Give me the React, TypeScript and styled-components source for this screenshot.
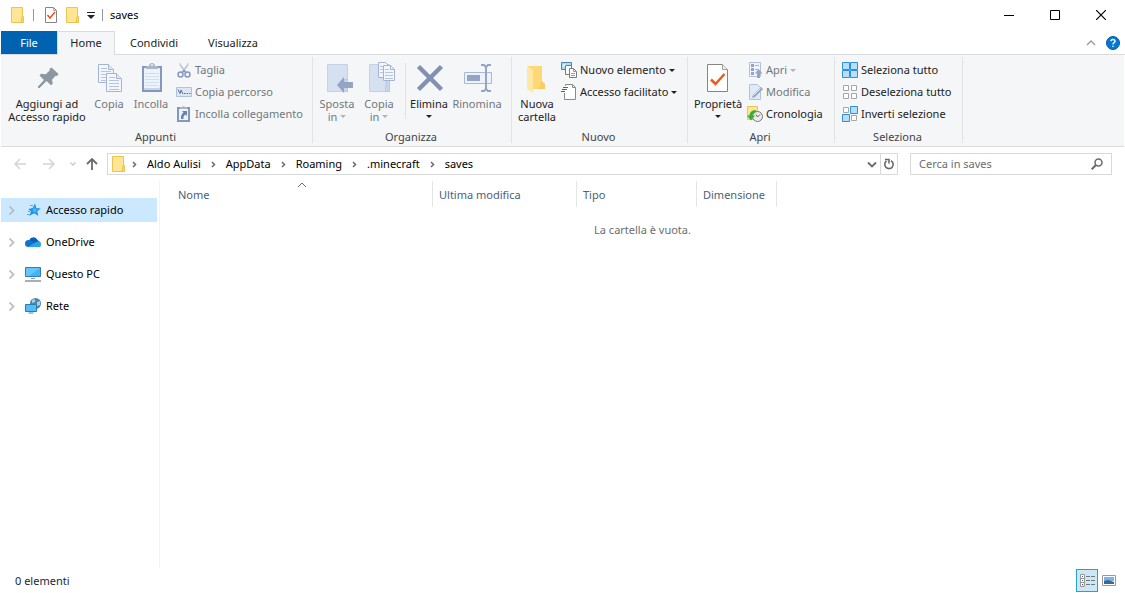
import React from "react";
import styled, { createGlobalStyle, css } from "styled-components";

const GlobalStyle = createGlobalStyle`
  *, *::before, *::after { box-sizing: border-box; }
  body {
    margin: 0;
    background: #fff;
    color: #000;
    font-family: "Noto Sans", "Open Sans", sans-serif;
    font-size: 11px;
    line-height: 16px;
  }
  button, input { font: inherit; color: inherit; }
  button { margin: 0; padding: 0; border: 0; background: none; }
  svg { display: block; flex: none; }
`;

const Window = styled.div`
  display: flex;
  flex-direction: column;
  min-height: 100vh;
`;

const TitleBar = styled.header`
  display: flex;
  align-items: flex-start;
  height: 31px;
  padding: 0 1px 0 10px;
`;

const QuickBar = styled.div`
  display: flex;
  align-items: center;
  gap: 7px;
  flex: 1;
  height: 30px;
`;

const QuickSeparator = styled.span`
  width: 1px;
  height: 12px;
  background: #999;
`;

const QuickGroup = styled.div`
  display: flex;
  align-items: center;
  gap: 6px;
  padding-left: 2px;
`;

const WindowTitle = styled.h1`
  margin: 0;
  font-size: 11px;
  font-weight: 400;
`;

const CaptionButton = styled.button`
  display: grid;
  place-items: center;
  width: 46px;
  height: 30px;
`;

const TabBar = styled.div`
  display: flex;
  height: 24px;
  padding: 0 5px 0 1px;
  border-bottom: 1px solid #dadbdc;
`;

const Tab = styled.button<{ $kind?: "file" | "active" }>`
  height: 23px;
  padding: 0 15px;
  min-width: 56px;
  color: #222;
  ${(p) =>
    p.$kind === "file" &&
    css`
      background: #0063b1;
      color: #fff;
      width: 56px;
    `}
  ${(p) =>
    p.$kind === "active" &&
    css`
      width: 58px;
      height: 24px;
      padding: 0 0 1px;
      border: 1px solid #dadbdc;
      border-bottom: 0;
      background: #f5f6f7;
    `}
`;

const TabTools = styled.div`
  display: flex;
  align-items: center;
  gap: 10px;
  margin-left: auto;
`;

const IconButton = styled.button<{ $w?: number }>`
  display: grid;
  place-items: center;
  width: ${(p) => (p.$w ? `${p.$w}px` : "auto")};
`;

const Ribbon = styled.section`
  display: flex;
  height: 92px;
  margin: 0 1px;
  padding: 2px 0 3px;
  border-bottom: 1px solid #dadbdc;
  background: #f5f6f7;
`;

const Group = styled.div<{ $w: number }>`
  display: flex;
  flex-direction: column;
  justify-content: space-between;
  flex: none;
  width: ${(p) => p.$w}px;
  border-right: 1px solid #e2e3e4;
`;

const GroupBody = styled.div`
  display: flex;
  height: 73px;
  padding-left: 4px;
`;

const GroupLabel = styled.div`
  padding-right: 2px;
  color: #444;
  text-align: center;
  line-height: 13px;
`;

const BigButton = styled.button<{ $w: number; $off?: boolean }>`
  display: flex;
  flex-direction: column;
  align-items: center;
  width: ${(p) => p.$w}px;
  padding-top: 5px;
  line-height: 13px;
  white-space: nowrap;
  color: ${(p) => (p.$off ? "#72767c" : "#222")};
`;

const BigText = styled.span`
  padding-top: 3px;
`;

const SecondLine = styled.span`
  display: flex;
  align-items: center;
  justify-content: center;
  gap: 3px;
  height: 13px;
`;

const SmallColumn = styled.div`
  display: flex;
  flex-direction: column;
  padding: 2px 0 0 3px;
`;

const SmallButton = styled.button<{ $off?: boolean }>`
  display: flex;
  align-items: center;
  gap: 3px;
  height: 22px;
  white-space: nowrap;
  color: ${(p) => (p.$off ? "#72767c" : "#222")};
`;

const InnerSeparator = styled.span`
  width: 1px;
  height: 56px;
  margin: 6px 0 0 4px;
  background: #e2e3e4;
`;

const NavBar = styled.div`
  display: flex;
  align-items: center;
  height: 34px;
  padding: 0 13px 0 12px;
`;

const HistoryButtons = styled.div`
  display: flex;
  align-items: center;
  width: 95px;
`;

const AddressBox = styled.div`
  display: flex;
  flex: 1;
  align-items: center;
  height: 22px;
  padding-left: 3px;
  border: 1px solid #d9d9d9;
`;

const Crumbs = styled.nav`
  display: flex;
  align-items: center;
  flex: 1;
  gap: 9px;
  padding-left: 4px;
`;

const Crumb = styled.a`
  color: #000;
  text-decoration: none;
`;

const RefreshCell = styled.div`
  display: grid;
  place-items: center;
  width: 17px;
  height: 20px;
  border-left: 1px solid #d9d9d9;
`;

const SearchBox = styled.form`
  display: flex;
  align-items: center;
  width: 202px;
  height: 22px;
  margin-left: 12px;
  padding: 0 8px;
  border: 1px solid #d9d9d9;
`;

const SearchInput = styled.input`
  flex: 1;
  min-width: 0;
  padding: 0;
  border: 0;
  outline: 0;
  background: none;
  &::placeholder { color: #6d6d6d; opacity: 1; }
`;

const Main = styled.div`
  display: flex;
  flex: 1;
`;

const Sidebar = styled.ul`
  display: flex;
  flex-direction: column;
  gap: 8px;
  width: 160px;
  margin: 0;
  padding: 17px 2px 0 1px;
  border-right: 1px solid #f3f3f3;
  list-style: none;
`;

const TreeItem = styled.a<{ $selected?: boolean }>`
  display: flex;
  align-items: center;
  gap: 5px;
  height: 24px;
  padding-left: 7px;
  color: #000;
  text-decoration: none;
  background: ${(p) => (p.$selected ? "#cce8ff" : "transparent")};
`;

const TreeIcon = styled.span`
  margin-left: 5px;
`;

const Content = styled.main`
  flex: 1;
  min-width: 0;
`;

const FileTable = styled.table`
  width: 617px;
  table-layout: fixed;
  border-collapse: separate;
  border-spacing: 0;
`;

const HeadCell = styled.th<{ $w: number; $first?: boolean }>`
  position: relative;
  width: ${(p) => p.$w}px;
  height: 26px;
  padding: 2px 0 0 ${(p) => (p.$first ? 18 : 6)}px;
  border-right: 1px solid #e5e5e5;
  color: #4c607a;
  font-weight: 400;
  text-align: left;
`;

const SortMark = styled.span`
  position: absolute;
  top: 1px;
  left: calc(50% + 1px);
`;

const EmptyMessage = styled.p`
  margin: 15px 0 0;
  color: #6d6d6d;
  text-align: center;
`;

const StatusBar = styled.footer`
  display: flex;
  align-items: center;
  height: 25px;
  padding: 0 9px 0 15px;
  color: #14283c;
`;

const ViewButtons = styled.div`
  display: flex;
  align-items: center;
  gap: 4px;
  margin-left: auto;
`;

const ViewButton = styled.button<{ $on?: boolean }>`
  display: grid;
  place-items: center;
  height: 23px;
  width: ${(p) => (p.$on ? 22 : 14)}px;
  border: ${(p) => (p.$on ? "1px solid #26a0da" : "0")};
  background: ${(p) => (p.$on ? "#cbe8f6" : "none")};
`;

const Svg = ({ w = 16, h = 16, children }: { w?: number; h?: number; children: React.ReactNode }) => (
  <svg width={w} height={h} viewBox={`0 0 ${w} ${h}`} fill="none" aria-hidden="true">
    {children}
  </svg>
);

const Caret = ({ off }: { off?: boolean }) => (
  <Svg w={6} h={3}>
    <path d="M0 0h6L3 3z" fill={off ? "#b1b3b6" : "#222"} />
  </Svg>
);

const FolderIcon = () => (
  <Svg w={16} h={18}>
    <path d="M1.500 1.500h11v11l1 1v3h-12z" fill="#ffe594" stroke="#eac54f" />
    <path d="M12 10.500h1.500v6H11z" fill="#ffd75e" stroke="#eac54f" />
  </Svg>
);

const CheckPageIcon = () => (
  <Svg w={16} h={18}>
    <path d="M2.500 1.500h8l3 3v12h-11z" fill="#fff" stroke="#858585" />
    <path d="M10.500 1.500v3h3" stroke="#a5a5a5" />
    <path d="M4.500 9l2.500 3 5-6" stroke="#f0531c" strokeWidth="1.600" />
  </Svg>
);

const PinIcon = () => (
  <Svg w={32} h={32}>
    <path d="M20.500 5.500L27.500 12l-1.500 2-1.500-.3-3.500 4 .7 4-1.700 1.600-4.500-4.300L8.500 26H7v-1.500l6-6.500-4.500-4.500L10 11.700l4.700.6 4-3.800-.2-1.500z" fill="#8d979f" />
  </Svg>
);

const CopyPage = ({ x, y }: { x: number; y: number }) => (
  <g transform={`translate(${x} ${y})`}>
    <path d="M.5.5h10l5 5v13H.5z" fill="#f3f7fd" stroke="#a4b4d2" />
    <path d="M10.500.5v5h5" fill="#dfe8f5" stroke="#a4b4d2" />
    <path d="M3 4.500h6M3 7.500h10M3 10.500h10M3 13.500h10M3 16.500h10" stroke="#b5c3dd" />
  </g>
);

const CopyIcon = () => (
  <Svg w={32} h={32}>
    <CopyPage x={5} y={2} />
    <CopyPage x={13} y={11} />
  </Svg>
);

const PasteIcon = () => (
  <Svg w={32} h={32}>
    <path d="M8 5h18v24H8z" fill="#edf3fb" stroke="#8497bd" strokeWidth="2" />
    <path d="M10 26h14l1-1v3H9v-2z" fill="#c6d4e8" />
    <path d="M10 11.500h14M10 14.500h14M10 17.500h14M10 20.500h14M10 23.500h14" stroke="#d3deee" />
    <path d="M11 7V4h3c0-4 6-4 6 0h3v3z" fill="#aab5c8" />
    <circle cx="17" cy="3" r="1" fill="#f5f6f7" />
  </Svg>
);

const ScissorsIcon = () => (
  <Svg>
    <path d="M3 0l1 4 4 5 1-1zM13 0l-1 4-4 5-1-1z" fill="#b7c2d3" />
    <circle cx="4.500" cy="12.500" r="2.500" stroke="#8497bd" strokeWidth="1.500" />
    <circle cx="11.500" cy="12.500" r="2.500" stroke="#8497bd" strokeWidth="1.500" />
    <path d="M6 11l2-3 2 3" stroke="#8497bd" strokeWidth="1.500" />
  </Svg>
);

const PathIcon = () => (
  <Svg>
    <path d="M.5 3.500h15v9H.5z" fill="#dce6f5" stroke="#b2c1dc" />
    <path d="M2 5.500l2 4 1-3.500 2 4" stroke="#5e7197" />
    <path d="M8 9.500h1.500M10.500 9.500H12M13 9.500h1.500" stroke="#5e7197" />
  </Svg>
);

const PasteLinkIcon = () => (
  <Svg>
    <path d="M2 2h11v13H2z" fill="#edf3fb" stroke="#8497bd" strokeWidth="2" />
    <path d="M4 3V1h2c0-1 3-1 3 0h2v2z" fill="#aab5c8" />
    <path d="M6 5h5v5L9.500 8.500Q7 10 7.500 13H5q-.5-4 2.500-6.500z" fill="#6d82ab" />
  </Svg>
);

const PaleFolder = () => (
  <>
    <path d="M6.500 2.500h20v27h-20z" fill="#d5e0f0" stroke="#c5d2e6" />
    <path d="M23.500 17.500h3v12h-4z" fill="#c8d6ea" stroke="#b9c8e0" />
  </>
);

const MoveToIcon = () => (
  <Svg w={32} h={32}>
    <PaleFolder />
    <path d="M16 23l7-8v5h9v6h-9v5z" fill="#93a4c4" />
  </Svg>
);

const CopyToIcon = () => (
  <Svg w={32} h={32}>
    <PaleFolder />
    <path d="M15.500.5h7l3 3v12h-10z" fill="#f3f7fd" stroke="#a4b4d2" />
    <path d="M17 4.500h5M17 7.500h5M17 10.500h5" stroke="#b5c3dd" />
    <path d="M20.500 3.500h7l4 4v11h-11z" fill="#f3f7fd" stroke="#a4b4d2" />
    <path d="M27.500 3.500v4h4" stroke="#a4b4d2" />
    <path d="M22 7.500h4M22 10.500h8M22 13.500h8M22 16.500h8" stroke="#b5c3dd" />
  </Svg>
);

const DeleteIcon = () => (
  <Svg w={32} h={32}>
    <path d="M5.500 4.500l23 23M28.500 4.500l-23 23" stroke="#8291b1" strokeWidth="4.500" />
  </Svg>
);

const RenameIcon = () => (
  <Svg w={32} h={32}>
    <path d="M3.500 10.500h27v11h-27z" fill="#edf3fb" stroke="#a9b8d4" />
    <path d="M6 13h13v6H6z" fill="#93a4c4" />
    <path d="M20 3h3l2 2 2-2h3M20 29h3l2-2 2 2h3M25 4v24" stroke="#93a4c4" strokeWidth="2" />
  </Svg>
);

const NewFolderIcon = () => (
  <Svg w={32} h={32}>
    <path d="M7 4h14v15l3 3v5H10z" fill="#ffd875" />
    <path d="M20 19l4 3v5h-6z" fill="#fbcb5d" />
    <path d="M6 4l6 4v23l-6-4z" fill="#ffe8a6" />
  </Svg>
);

const NewItemIcon = () => (
  <Svg>
    <path d="M.5.5h10v7H.5z" fill="#a9dcf5" stroke="#4f87a6" />
    <path d="M2 2.500h3v2H2z" fill="#fff" />
    <path d="M4.500 3.500h6v9h-6z" fill="#fff" stroke="#7a7a7a" />
    <path d="M8.500 6.500h4l3 3v6h-7z" fill="#fff" stroke="#7a7a7a" />
    <path d="M12.500 6.500v3h3M10 11.500h4M10 13.500h4" stroke="#9a9a9a" />
  </Svg>
);

const EasyAccessIcon = () => (
  <Svg>
    <path d="M4.500 2V.5h7l3 3v12h-11V9" fill="#fff" stroke="#8a8a8a" />
    <path d="M11.500.5v3h3" stroke="#8a8a8a" />
    <path d="M2 3.500h5M1 5.500h5M0 7.500h4" stroke="#2b6ca8" />
  </Svg>
);

const PropertiesIcon = () => (
  <Svg w={32} h={32}>
    <path d="M5.500 2.500h15l5 5v22h-20z" fill="#fff" stroke="#858585" />
    <path d="M20.500 2.500v5h5" fill="#eee" stroke="#a0a0a0" />
    <path d="M9 17.500l4.500 4.500L22.500 12" stroke="#f0591e" strokeWidth="2.500" />
  </Svg>
);

const OpenIcon = () => (
  <Svg>
    <path d="M2.500.5h11v14h-11z" fill="#f0f5fc" stroke="#b2c1dc" />
    <path d="M4 2h3v3H4zM4 6h3v3H4zM4 10h3v3H4z" fill="#93a4c4" />
    <path d="M8 3.500h4M8 7.500h3" stroke="#a4b4d2" />
    <path d="M11.500 7l4 4.500h-2.500V16h-3v-4.500H8z" fill="#93a4c4" />
  </Svg>
);

const EditIcon = () => (
  <Svg>
    <path d="M2.500.5h8l3 3v12h-11z" fill="#dfe9f7" stroke="#b2c1dc" />
    <path d="M5 14l1-3 8-8 2 2-8 8z" fill="#93a4c4" />
    <path d="M6.500 11.500l7-7" stroke="#dfe9f7" />
  </Svg>
);

const HistoryIcon = () => (
  <Svg>
    <path d="M.5.5h10v13H.5z" fill="#ffe594" stroke="#eac54f" />
    <circle cx="10.500" cy="10.500" r="5" fill="#eaeaea" stroke="#777" />
    <path d="M9 8.500l1.500 2.500L13 8.500" stroke="#666" />
    <path d="M8.500 4Q2.500 4.500 2.500 9.500H0l4 5 4-5H5.500q.5-3.500 4-3.500z" fill="#35b035" />
  </Svg>
);

type Cell = [number, number, boolean];
const GridIcon = ({ cells }: { cells: Cell[] }) => (
  <Svg>
    {cells.map(([x, y, on]) =>
      on ? (
        <path key={`${x}-${y}`} d={`M${x + 0.5} ${y + 0.5}h7v7h-7z`} fill="#b5dffb" stroke="#2f8fdc" />
      ) : (
        <path key={`${x}-${y}`} d={`M${x + 1.5} ${y + 1.5}h5v5h-5z`} fill="#fff" stroke="#a6a6a6" />
      ),
    )}
  </Svg>
);

const corners: [number, number][] = [[0, 0], [8, 0], [0, 8], [8, 8]];
const cellsFor = (marks: boolean[]): Cell[] => corners.map(([x, y], i) => [x, y, marks[i]]);

const ChevronRight = ({ color, big }: { color: string; big?: boolean }) =>
  big ? (
    <Svg w={7} h={9}>
      <path d="M1.500 0.500l4 4-4 4" stroke={color} strokeWidth="1.600" />
    </Svg>
  ) : (
    <Svg w={7} h={7}>
      <path d="M2 1l2.500 2.500L2 6" stroke={color} strokeWidth="1.500" />
    </Svg>
  );

const StarIcon = () => (
  <Svg>
    <path d="M10 1.500L11.300 6l4.500.5-3.500 2.800 1 4.700-4-2.700L4 14l2-4.500L3.300 7l4.400-1z" fill="#1e93e0" />
    <path d="M9.700 4.500l.8 2.500 2.500.3-2 1.500.4 2.200-2-1.500-2 .8 1-2.300-1.400-1 2-.3z" fill="#4db8f5" />
    <path d="M5 3.500h3M3 9.500h2M2 12.500h2" stroke="#5aa9dd" />
  </Svg>
);

const CloudIcon = () => (
  <Svg>
    <path d="M4 7a4.500 4.500 0 0 1 8.500-1L16 9l-6 4z" fill="#0a5fb8" />
    <path d="M3.500 13a3.500 3.500 0 0 1 0-7q2 0 4 1.500L12 12z" fill="#0f73cf" />
    <path d="M3 13l8-5q5-1 5 2.500T13 13z" fill="#28a4e8" />
  </Svg>
);

const PcIcon = () => (
  <Svg>
    <path d="M.5 1.500h15v9H.5z" fill="#3fb4ff" stroke="#347fa8" />
    <path d="M1 2h14L4 10H1z" fill="#64c6ff" />
    <path d="M6 12.500h4" stroke="#8a9aa4" />
    <path d="M0 15h16" stroke="#a3b1ba" strokeWidth="2" />
  </Svg>
);

const NetworkIcon = () => (
  <Svg>
    <circle cx="10.500" cy="5.500" r="5.500" fill="#4b87aa" />
    <path d="M7 2q4-2 3 2l-3 1zM12 4l3-1v4l-3 1z" fill="#a9d2e6" />
    <path d="M.5 6.500h11v7H.5z" fill="#52bdf7" stroke="#2a7fae" />
    <path d="M3.500 15h5" stroke="#4d87a6" />
  </Svg>
);

const places = [
  { name: "Accesso rapido", icon: <StarIcon />, selected: true },
  { name: "OneDrive", icon: <CloudIcon /> },
  { name: "Questo PC", icon: <PcIcon /> },
  { name: "Rete", icon: <NetworkIcon /> },
];

const path = ["Aldo Aulisi", "AppData", "Roaming", ".minecraft", "saves"];

export default function App() {
  return (
    <Window>
      <GlobalStyle />
      <TitleBar>
        <QuickBar>
          <FolderIcon />
          <QuickSeparator />
          <QuickGroup>
            <IconButton aria-label="Proprietà"><CheckPageIcon /></IconButton>
            <IconButton aria-label="Nuova cartella"><FolderIcon /></IconButton>
            <IconButton aria-label="Personalizza barra di accesso rapido">
              <Svg w={8} h={8}>
                <path d="M0 1.500h8" stroke="#222" />
                <path d="M0 4h8L4 8z" fill="#222" />
              </Svg>
            </IconButton>
          </QuickGroup>
          <QuickSeparator />
          <WindowTitle>saves</WindowTitle>
        </QuickBar>
        <CaptionButton aria-label="Riduci a icona">
          <Svg w={10} h={10}><path d="M0 5.500h10" stroke="#000" /></Svg>
        </CaptionButton>
        <CaptionButton aria-label="Ingrandisci">
          <Svg w={10} h={10}><path d="M.5.5h9v9h-9z" stroke="#000" /></Svg>
        </CaptionButton>
        <CaptionButton aria-label="Chiudi">
          <Svg w={10} h={10}><path d="M0 0l10 10M10 0L0 10" stroke="#000" strokeWidth="1.200" /></Svg>
        </CaptionButton>
      </TitleBar>

      <TabBar>
        <Tab $kind="file">File</Tab>
        <Tab $kind="active">Home</Tab>
        <Tab>Condividi</Tab>
        <Tab>Visualizza</Tab>
        <TabTools>
          <IconButton aria-label="Riduci barra multifunzione">
            <Svg w={10} h={6}><path d="M1 5l4-4 4 4" stroke="#999" strokeWidth="1.300" /></Svg>
          </IconButton>
          <IconButton aria-label="Guida">
            <Svg w={14} h={14}>
              <circle cx="7" cy="7" r="6.500" fill="#0078d7" stroke="#0b5a9c" />
              <path d="M5 5.300Q5 3.500 7 3.500T9 5.300Q9 6.300 7.800 6.900 7 7.400 7 8.500" stroke="#fff" strokeWidth="1.400" />
              <path d="M6.300 9.700h1.400v1.400H6.300z" fill="#fff" />
            </Svg>
          </IconButton>
        </TabTools>
      </TabBar>

      <Ribbon>
        <Group $w={312}>
          <GroupBody>
            <BigButton $w={84}><PinIcon /><BigText>Aggiungi ad<br />Accesso rapido</BigText></BigButton>
            <BigButton $w={40} $off><CopyIcon /><BigText>Copia</BigText></BigButton>
            <BigButton $w={44} $off><PasteIcon /><BigText>Incolla</BigText></BigButton>
            <SmallColumn>
              <SmallButton $off><ScissorsIcon />Taglia</SmallButton>
              <SmallButton $off><PathIcon />Copia percorso</SmallButton>
              <SmallButton $off><PasteLinkIcon />Incolla collegamento</SmallButton>
            </SmallColumn>
          </GroupBody>
          <GroupLabel>Appunti</GroupLabel>
        </Group>

        <Group $w={199}>
          <GroupBody>
            <BigButton $w={40} $off>
              <MoveToIcon /><BigText>Sposta<SecondLine>in <Caret off /></SecondLine></BigText>
            </BigButton>
            <BigButton $w={44} $off>
              <CopyToIcon /><BigText>Copia<SecondLine>in <Caret off /></SecondLine></BigText>
            </BigButton>
            <InnerSeparator />
            <BigButton $w={46}>
              <DeleteIcon /><BigText>Elimina<SecondLine><Caret /></SecondLine></BigText>
            </BigButton>
            <BigButton $w={50} $off><RenameIcon /><BigText>Rinomina</BigText></BigButton>
          </GroupBody>
          <GroupLabel>Organizza</GroupLabel>
        </Group>

        <Group $w={176}>
          <GroupBody>
            <BigButton $w={42}><NewFolderIcon /><BigText>Nuova<br />cartella</BigText></BigButton>
            <SmallColumn>
              <SmallButton><NewItemIcon />Nuovo elemento <Caret /></SmallButton>
              <SmallButton><EasyAccessIcon />Accesso facilitato <Caret /></SmallButton>
            </SmallColumn>
          </GroupBody>
          <GroupLabel>Nuovo</GroupLabel>
        </Group>

        <Group $w={147}>
          <GroupBody>
            <BigButton $w={52}>
              <PropertiesIcon /><BigText>Proprietà<SecondLine><Caret /></SecondLine></BigText>
            </BigButton>
            <SmallColumn>
              <SmallButton $off><OpenIcon />Apri <Caret off /></SmallButton>
              <SmallButton $off><EditIcon />Modifica</SmallButton>
              <SmallButton><HistoryIcon />Cronologia</SmallButton>
            </SmallColumn>
          </GroupBody>
          <GroupLabel>Apri</GroupLabel>
        </Group>

        <Group $w={128}>
          <GroupBody>
            <SmallColumn>
              <SmallButton><GridIcon cells={cellsFor([true, true, true, true])} />Seleziona tutto</SmallButton>
              <SmallButton><GridIcon cells={cellsFor([false, false, false, false])} />Deseleziona tutto</SmallButton>
              <SmallButton><GridIcon cells={cellsFor([false, true, true, false])} />Inverti selezione</SmallButton>
            </SmallColumn>
          </GroupBody>
          <GroupLabel>Seleziona</GroupLabel>
        </Group>
      </Ribbon>

      <NavBar>
        <HistoryButtons>
          <IconButton $w={16} aria-label="Indietro">
            <Svg w={12} h={12}><path d="M12 6H1M6 1L1 6l5 5" stroke="#d4d4d4" strokeWidth="1.500" /></Svg>
          </IconButton>
          <IconButton $w={44} aria-label="Avanti">
            <Svg w={12} h={12}><path d="M0 6h11M6 1l5 5-5 5" stroke="#d4d4d4" strokeWidth="1.500" /></Svg>
          </IconButton>
          <IconButton $w={6} aria-label="Percorsi recenti">
            <Svg w={6} h={4}><path d="M.5.5L3 3 5.500.5" stroke="#c8c8c8" strokeWidth="1.300" /></Svg>
          </IconButton>
          <IconButton $w={32} aria-label="Su">
            <Svg w={12} h={12}><path d="M6 12V1M1 6l5-5 5 5" stroke="#6a6a6a" strokeWidth="1.800" /></Svg>
          </IconButton>
        </HistoryButtons>
        <AddressBox>
          <FolderIcon />
          <Crumbs aria-label="Percorso">
            {path.map((name, i) => (
              <React.Fragment key={name}>
                <ChevronRight color="#6a6a6a" />
                <Crumb href={`#${i}`}>{name}</Crumb>
              </React.Fragment>
            ))}
          </Crumbs>
          <IconButton $w={16} aria-label="Percorsi precedenti">
            <Svg w={10} h={7}><path d="M1 1.500l4 4 4-4" stroke="#6a6a6a" strokeWidth="1.800" /></Svg>
          </IconButton>
          <RefreshCell>
            <IconButton aria-label="Aggiorna">
              <Svg w={12} h={12}>
                <path d="M8 2.700A4.200 4.200 0 1 1 3.500 3" stroke="#6a6a6a" strokeWidth="1.600" />
                <path d="M2 1.500h4v4" stroke="#6a6a6a" strokeWidth="1.600" />
              </Svg>
            </IconButton>
          </RefreshCell>
        </AddressBox>
        <SearchBox role="search">
          <SearchInput aria-label="Cerca in saves" placeholder="Cerca in saves" />
          <IconButton type="button" aria-label="Cerca">
            <Svg w={12} h={12}>
              <circle cx="7.500" cy="4.500" r="3.500" stroke="#6a6a6a" strokeWidth="1.500" />
              <path d="M5 7L.7 11.300" stroke="#6a6a6a" strokeWidth="2" />
            </Svg>
          </IconButton>
        </SearchBox>
      </NavBar>

      <Main>
        <Sidebar>
          {places.map((p) => (
            <li key={p.name}>
              <TreeItem href="#" $selected={p.selected}>
                <ChevronRight color="#b8b8b8" big />
                <TreeIcon>{p.icon}</TreeIcon>
                {p.name}
              </TreeItem>
            </li>
          ))}
        </Sidebar>
        <Content>
          <FileTable>
            <thead>
              <tr>
                <HeadCell $w={273} $first scope="col">
                  Nome
                  <SortMark>
                    <Svg w={10} h={6}><path d="M1 5l4-4 4 4" stroke="#6a6a6a" /></Svg>
                  </SortMark>
                </HeadCell>
                <HeadCell $w={144} scope="col">Ultima modifica</HeadCell>
                <HeadCell $w={120} scope="col">Tipo</HeadCell>
                <HeadCell $w={80} scope="col">Dimensione</HeadCell>
              </tr>
            </thead>
          </FileTable>
          <EmptyMessage>La cartella è vuota.</EmptyMessage>
        </Content>
      </Main>

      <StatusBar>
        0 elementi
        <ViewButtons>
          <ViewButton $on aria-label="Dettagli">
            <Svg w={18} h={15}>
              <path d="M2.500 1.500h4v12h-4zM2.500 5.500h4M2.500 9.500h4" fill="#fff" stroke="#999" />
              <path d="M4 3h1v1H4z" fill="#555" />
              <path d="M4 7h1v1H4z" fill="#2b7fd6" />
              <path d="M4 11h1v1H4z" fill="#d22" />
              <path d="M8 3.500h4M13 3.500h4M8 7.500h4M13 7.500h4M8 11.500h4M13 11.500h4" stroke="#777" />
            </Svg>
          </ViewButton>
          <ViewButton aria-label="Icone grandi">
            <Svg w={14} h={11}>
              <path d="M.5.5h13v10H.5z" fill="#fff" stroke="#999" />
              <path d="M2 2h10v4H2z" fill="#7db2ee" />
              <path d="M2 6l4-1 6 2v2H2z" fill="#3a6a8f" />
            </Svg>
          </ViewButton>
        </ViewButtons>
      </StatusBar>
    </Window>
  );
}
